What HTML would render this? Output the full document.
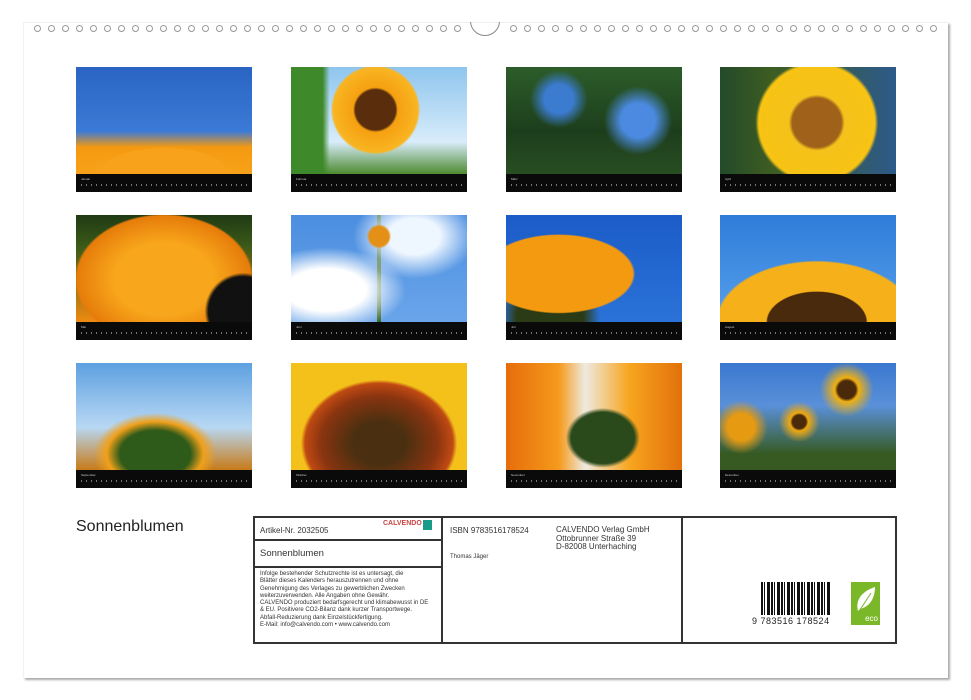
<!DOCTYPE html>
<html><head><meta charset="utf-8"><style>
*{margin:0;padding:0;box-sizing:border-box}
body{width:971px;height:700px;background:#fff;position:relative;overflow:hidden;font-family:"Liberation Sans",sans-serif}
.page{position:absolute;left:23px;top:22px;width:925px;height:656px;background:#fff;box-shadow:2px 2px 2px #aaa;border-top:1px solid #eee;border-left:1px solid #f2f2f2}
.hole{position:absolute;top:25px;width:7px;height:7px;border:1px solid #999;border-radius:50%}
.notch{position:absolute;left:470px;top:6px;width:30px;height:30px;border:1px solid #888;border-radius:50%;clip-path:inset(16px 0 0 0)}
.t{position:absolute;width:176px;height:125px}
.ph{position:absolute;left:0;top:0;width:176px;height:107px}
.st{position:absolute;left:0;top:107px;width:176px;height:18px;background:#0a0a0a}
.st i{position:absolute;left:5px;top:3px;font-style:normal;font-size:3px;color:#ccc}
.st b{position:absolute;left:5px;top:10px;right:5px;height:2px;background:repeating-linear-gradient(90deg,#777 0 1px,transparent 1px 5px)}
.box{position:absolute;border:2px solid #333}
.small{font-size:6px;color:#333;line-height:7.3px;white-space:nowrap}
</style></head><body>
<div class="page"></div>
<div id="holes"></div>
<div class="notch"></div>
<script>
var h='';for(var i=0;i<31;i++){h+='<div class="hole" style="left:'+(34+i*14)+'px"></div>';h+='<div class="hole" style="left:'+(510+i*14)+'px"></div>';}
document.getElementById('holes').innerHTML=h;
</script>

<div class="t" style="left:76px;top:67px"><div class="ph" style="background:radial-gradient(ellipse 60% 40% at 50% 100%,#f7a21a 60%,transparent 62%),linear-gradient(#2a64c2,#3b7ad6 60%,#f59a10 75%,#f7a21a)"></div><div class="st"><i>Januar</i><b></b></div></div>
<div class="t" style="left:291px;top:67px"><div class="ph" style="background:radial-gradient(circle at 48% 40%,#5a2e0c 18%,#f5a011 20%,#f9b522 38%,transparent 40%),linear-gradient(90deg,#3e8a2a 0 18%,transparent 22%),linear-gradient(#8ec5ee,#d8ecfa 70%,#4d8a30)"></div><div class="st"><i>Februar</i><b></b></div></div>
<div class="t" style="left:506px;top:67px"><div class="ph" style="background:radial-gradient(circle at 30% 30%,#3b7bd0 10%,transparent 20%),radial-gradient(circle at 75% 50%,#4b8ae0 12%,transparent 24%),linear-gradient(#2c5d2a,#1d3e1c 60%,#284d23)"></div><div class="st"><i>März</i><b></b></div></div>
<div class="t" style="left:720px;top:67px"><div class="ph" style="background:radial-gradient(circle at 55% 52%,#a0621a 22%,#f4c21a 25%,#f7c314 52%,transparent 55%),linear-gradient(90deg,#234a2a,#3e5d22 30%,#2c5a8a)"></div><div class="st"><i>April</i><b></b></div></div>

<div class="t" style="left:76px;top:215px"><div class="ph" style="background:radial-gradient(circle at 95% 90%,#111 18%,transparent 20%),radial-gradient(ellipse at 50% 60%,#f8a61c 40%,#e67c0a 70%,transparent 72%),linear-gradient(#1f3a14,#3c5a18 30%,#ef8a10)"></div><div class="st"><i>Mai</i><b></b></div></div>
<div class="t" style="left:291px;top:215px"><div class="ph" style="background:radial-gradient(circle at 50% 20%,#e49016 8%,transparent 10%),radial-gradient(ellipse at 20% 70%,#fff 20%,transparent 40%),radial-gradient(ellipse at 70% 20%,#eef6ff 15%,transparent 35%),linear-gradient(90deg,transparent 49%,#3d6a25 49% 51%,transparent 51%),linear-gradient(#4b8ee0,#6aa5ea)"></div><div class="st"><i>Juni</i><b></b></div></div>
<div class="t" style="left:506px;top:215px"><div class="ph" style="background:radial-gradient(ellipse 70% 60% at 30% 55%,#f39a10 60%,transparent 62%),radial-gradient(circle at 25% 95%,#2b3b15 20%,transparent 30%),linear-gradient(#1c5cc8,#2a72d8)"></div><div class="st"><i>Juli</i><b></b></div></div>
<div class="t" style="left:720px;top:215px"><div class="ph" style="background:radial-gradient(ellipse 40% 40% at 55% 100%,#4a2a0c 70%,transparent 72%),radial-gradient(ellipse 70% 70% at 55% 100%,#f6b01a 80%,transparent 82%),linear-gradient(#2d7cd8,#58a0ec)"></div><div class="st"><i>August</i><b></b></div></div>

<div class="t" style="left:76px;top:363px"><div class="ph" style="background:radial-gradient(ellipse 50% 55% at 45% 85%,#2e5a1a 40%,#f0a01a 55%,transparent 70%),linear-gradient(#5da0e0,#b8d8f4 60%,#c77a18)"></div><div class="st"><i>September</i><b></b></div></div>
<div class="t" style="left:291px;top:363px"><div class="ph" style="background:radial-gradient(ellipse 60% 80% at 50% 75%,#4a3010 25%,#8a3410 55%,#c04a12 70%,#f4c11a 74%)"></div><div class="st"><i>Oktober</i><b></b></div></div>
<div class="t" style="left:506px;top:363px"><div class="ph" style="background:radial-gradient(ellipse 30% 40% at 55% 70%,#2a4a1c 60%,transparent 70%),linear-gradient(90deg,#e66d0a,#f59a1c 30%,#eeeae0 45%,#f7a51e 70%,#e2700c)"></div><div class="st"><i>November</i><b></b></div></div>
<div class="t" style="left:720px;top:363px"><div class="ph" style="background:radial-gradient(circle at 72% 25%,#4a2a0a 6%,#f0b010 8%,transparent 18%),radial-gradient(circle at 45% 55%,#4a2a0a 6%,#f0a810 8%,transparent 18%),radial-gradient(circle at 12% 60%,#e69a12 8%,transparent 16%),linear-gradient(#3a78d0,#5a90d8 40%,#365a22 85%)"></div><div class="st"><i>Dezember</i><b></b></div></div>

<div style="position:absolute;left:76px;top:518px;font-size:16px;color:#222">Sonnenblumen</div>

<div class="box" style="left:253px;top:516px;width:644px;height:128px"></div>
<div style="position:absolute;left:441px;top:516px;width:2px;height:128px;background:#333"></div>
<div style="position:absolute;left:681px;top:516px;width:2px;height:128px;background:#333"></div>
<div style="position:absolute;left:253px;top:539px;width:189px;height:2px;background:#333"></div>
<div style="position:absolute;left:253px;top:566px;width:189px;height:2px;background:#333"></div>

<div style="position:absolute;left:260px;top:526px;font-size:8px;color:#333">Artikel-Nr. 2032505</div>
<div style="position:absolute;left:383px;top:520px;font-size:7px;color:#c44;font-weight:bold">CALVENDO</div>
<div style="position:absolute;left:423px;top:520px;width:9px;height:10px;background:#1a9b8a"></div>
<div style="position:absolute;left:260px;top:548px;font-size:9.5px;color:#333">Sonnenblumen</div>
<div class="small" style="position:absolute;left:260px;top:571px">Infolge bestehender Schutzrechte ist es untersagt, die<br>Blätter dieses Kalenders herauszutrennen und ohne<br>Genehmigung des Verlages zu gewerblichen Zwecken<br>weiterzuverwenden. Alle Angaben ohne Gewähr.<br>CALVENDO produziert bedarfsgerecht und klimabewusst in DE<br>&amp; EU. Positivere CO2-Bilanz dank kurzer Transportwege.<br>Abfall-Reduzierung dank Einzelstückfertigung.<br>E-Mail: info@calvendo.com • www.calvendo.com</div>

<div style="position:absolute;left:450px;top:526px;font-size:8px;color:#333">ISBN 9783516178524</div>
<div style="position:absolute;left:556px;top:526px;font-size:8px;color:#333;line-height:8.5px">CALVENDO Verlag GmbH<br>Ottobrunner Straße 39<br>D-82008 Unterhaching</div>
<div style="position:absolute;left:450px;top:554px;font-size:6px;color:#333">Thomas Jäger</div>

<div style="position:absolute;left:761px;top:582px;width:70px;height:33px;background:repeating-linear-gradient(90deg,#111 0 2px,#fff 2px 3px,#111 3px 4px,#fff 4px 6px,#111 6px 9px,#fff 9px 10px)"></div>
<div style="position:absolute;left:752px;top:616px;font-size:9px;color:#222;letter-spacing:0.5px">9 783516 178524</div>
<div style="position:absolute;left:851px;top:582px;width:29px;height:43px;background:#7ab829;color:#fff;font-size:8px;text-align:right;padding:32px 2px 0 0">eco</div>
<svg style="position:absolute;left:853px;top:585px" width="25" height="30" viewBox="0 0 25 30"><path d="M5 26 C2 14 10 6 22 2 C22 14 16 22 7 24 Z" fill="#fff"/><path d="M5 28 L18 8" stroke="#7ab829" stroke-width="1"/></svg>
</body></html>
